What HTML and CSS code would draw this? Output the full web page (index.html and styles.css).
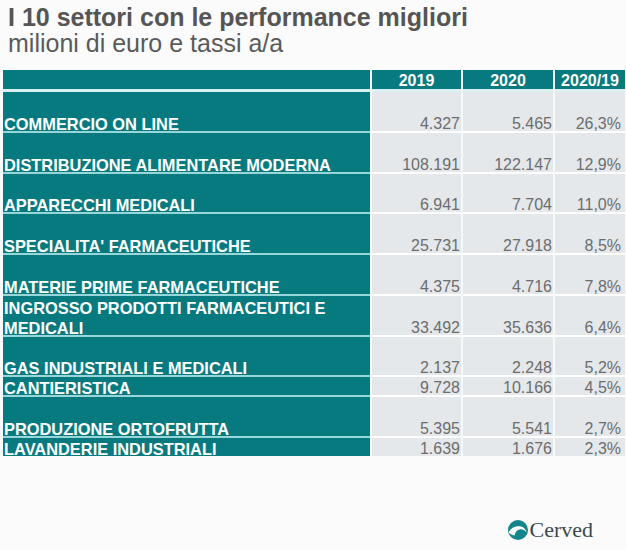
FILE: index.html
```html
<!DOCTYPE html>
<html lang="it">
<head>
<meta charset="utf-8">
<title>I 10 settori con le performance migliori</title>
<link rel="stylesheet" href="styles.css">
</head>
<body>
<div class="slide">
  <header class="heading">
    <h1 class="title">I 10 settori con le performance migliori</h1>
    <p class="subtitle">milioni di euro e tassi a/a</p>
  </header>

  <div class="table">
    <div class="row head">
      <div class="cell label"></div>
      <div class="cell hnum"><span>2019</span></div>
      <div class="cell hnum"><span>2020</span></div>
      <div class="cell hnum"><span>2020/19</span></div>
    </div>
    <div class="row tall">
      <div class="cell label"><span>COMMERCIO ON LINE</span></div>
      <div class="cell num"><span>4.327</span></div>
      <div class="cell num"><span>5.465</span></div>
      <div class="cell num pct"><span>26,3%</span></div>
    </div>
    <div class="row tall">
      <div class="cell label"><span>DISTRIBUZIONE ALIMENTARE MODERNA</span></div>
      <div class="cell num"><span>108.191</span></div>
      <div class="cell num"><span>122.147</span></div>
      <div class="cell num pct"><span>12,9%</span></div>
    </div>
    <div class="row tall">
      <div class="cell label"><span>APPARECCHI MEDICALI</span></div>
      <div class="cell num"><span>6.941</span></div>
      <div class="cell num"><span>7.704</span></div>
      <div class="cell num pct"><span>11,0%</span></div>
    </div>
    <div class="row tall">
      <div class="cell label"><span>SPECIALITA' FARMACEUTICHE</span></div>
      <div class="cell num"><span>25.731</span></div>
      <div class="cell num"><span>27.918</span></div>
      <div class="cell num pct"><span>8,5%</span></div>
    </div>
    <div class="row tall">
      <div class="cell label"><span>MATERIE PRIME FARMACEUTICHE</span></div>
      <div class="cell num"><span>4.375</span></div>
      <div class="cell num"><span>4.716</span></div>
      <div class="cell num pct"><span>7,8%</span></div>
    </div>
    <div class="row tall">
      <div class="cell label"><span>INGROSSO PRODOTTI FARMACEUTICI E<br>MEDICALI</span></div>
      <div class="cell num"><span>33.492</span></div>
      <div class="cell num"><span>35.636</span></div>
      <div class="cell num pct"><span>6,4%</span></div>
    </div>
    <div class="row tall">
      <div class="cell label"><span>GAS INDUSTRIALI E MEDICALI</span></div>
      <div class="cell num"><span>2.137</span></div>
      <div class="cell num"><span>2.248</span></div>
      <div class="cell num pct"><span>5,2%</span></div>
    </div>
    <div class="row short">
      <div class="cell label"><span>CANTIERISTICA</span></div>
      <div class="cell num"><span>9.728</span></div>
      <div class="cell num"><span>10.166</span></div>
      <div class="cell num pct"><span>4,5%</span></div>
    </div>
    <div class="row tall">
      <div class="cell label"><span>PRODUZIONE ORTOFRUTTA</span></div>
      <div class="cell num"><span>5.395</span></div>
      <div class="cell num"><span>5.541</span></div>
      <div class="cell num pct"><span>2,7%</span></div>
    </div>
    <div class="row short last">
      <div class="cell label"><span>LAVANDERIE INDUSTRIALI</span></div>
      <div class="cell num"><span>1.639</span></div>
      <div class="cell num"><span>1.676</span></div>
      <div class="cell num pct"><span>2,3%</span></div>
    </div>
  </div>

  <footer class="footer">
    <div class="logo">
      <svg class="logo-mark" width="20" height="20" viewBox="0 0 20 20" aria-hidden="true">
        <circle cx="10" cy="10" r="10" fill="#13858a"/>
        <path d="M0.6 12.6 C3 7.2 8.6 5.2 13.2 6.6 C16.4 7.6 18.2 10.2 18.4 12.4 C16.8 10 14.2 8.8 11.4 9.4 C8.6 10 7 12.4 6.6 15.6 C4.6 15.2 2.2 14.2 0.6 12.6 Z" fill="#ffffff"/>
      </svg>
      <span class="logo-text">Cerved</span>
    </div>
  </footer>
</div>
</body>
</html>
```

FILE: styles.css
```css
* { box-sizing: border-box; }

html, body {
  margin: 0;
  padding: 0;
}

body {
  width: 626px;
  height: 550px;
  background: #fbfbfb;
  font-family: "Liberation Sans", Arial, sans-serif;
  overflow: hidden;
}

.slide {
  display: flex;
  flex-direction: column;
  height: 550px;
}

.heading {
  padding: 4px 0 0 8px;
  color: #555555;
}

.title {
  margin: 0;
  font-size: 25px;
  line-height: 26px;
  font-weight: bold;
}

.subtitle {
  margin: 0;
  font-size: 25px;
  line-height: 26px;
  font-weight: normal;
  color: #5a5a5a;
}

.table {
  margin: 14px 0 0 3px;
  width: 622px;
  display: flex;
  flex-direction: column;
  background: #f4fafa;
}

.row {
  display: grid;
  grid-template-columns: 367px 89px 90px 70px;
  column-gap: 2px;
}

.row.head { height: 22px; }
.row.tall { height: 40.75px; }
.row.short { height: 20px; }
.row.last { height: 18px; }

.cell {
  display: flex;
  align-items: flex-end;
  overflow: visible;
  border-bottom: 2px solid #ffffff;
  background: #e4e8eb;
}

.cell > span {
  line-height: 20px;
  margin-bottom: -3px;
  font-size: 16px;
  white-space: nowrap;
}

.cell.label {
  background: #077a80;
  border-bottom-color: #97d6d9;
  color: #ffffff;
  font-weight: bold;
  padding-left: 1px;
}

.cell.label > span {
  font-size: 16.4px;
}

.head .cell {
  background: #077a80;
  border-bottom: 3px solid #d8f0f1;
}

.head .cell > span {
  margin-bottom: -2px;
}

.cell.hnum {
  justify-content: center;
  color: #ffffff;
  font-weight: bold;
}

.cell.num {
  justify-content: flex-end;
  padding-right: 1px;
  color: #6d6d6d;
}

.cell.num.pct {
  padding-right: 4px;
}

.row.last .cell {
  border-bottom: none;
}

.footer {
  flex: 1;
  display: flex;
  justify-content: flex-end;
  align-items: flex-start;
  padding: 63px 33px 0 0;
}

.logo {
  display: flex;
  align-items: center;
  gap: 1px;
}

.logo-mark {
  display: block;
}

.logo-text {
  font-family: "Liberation Serif", "Times New Roman", serif;
  font-size: 22px;
  line-height: 22px;
  color: #3a4a50;
}
```
